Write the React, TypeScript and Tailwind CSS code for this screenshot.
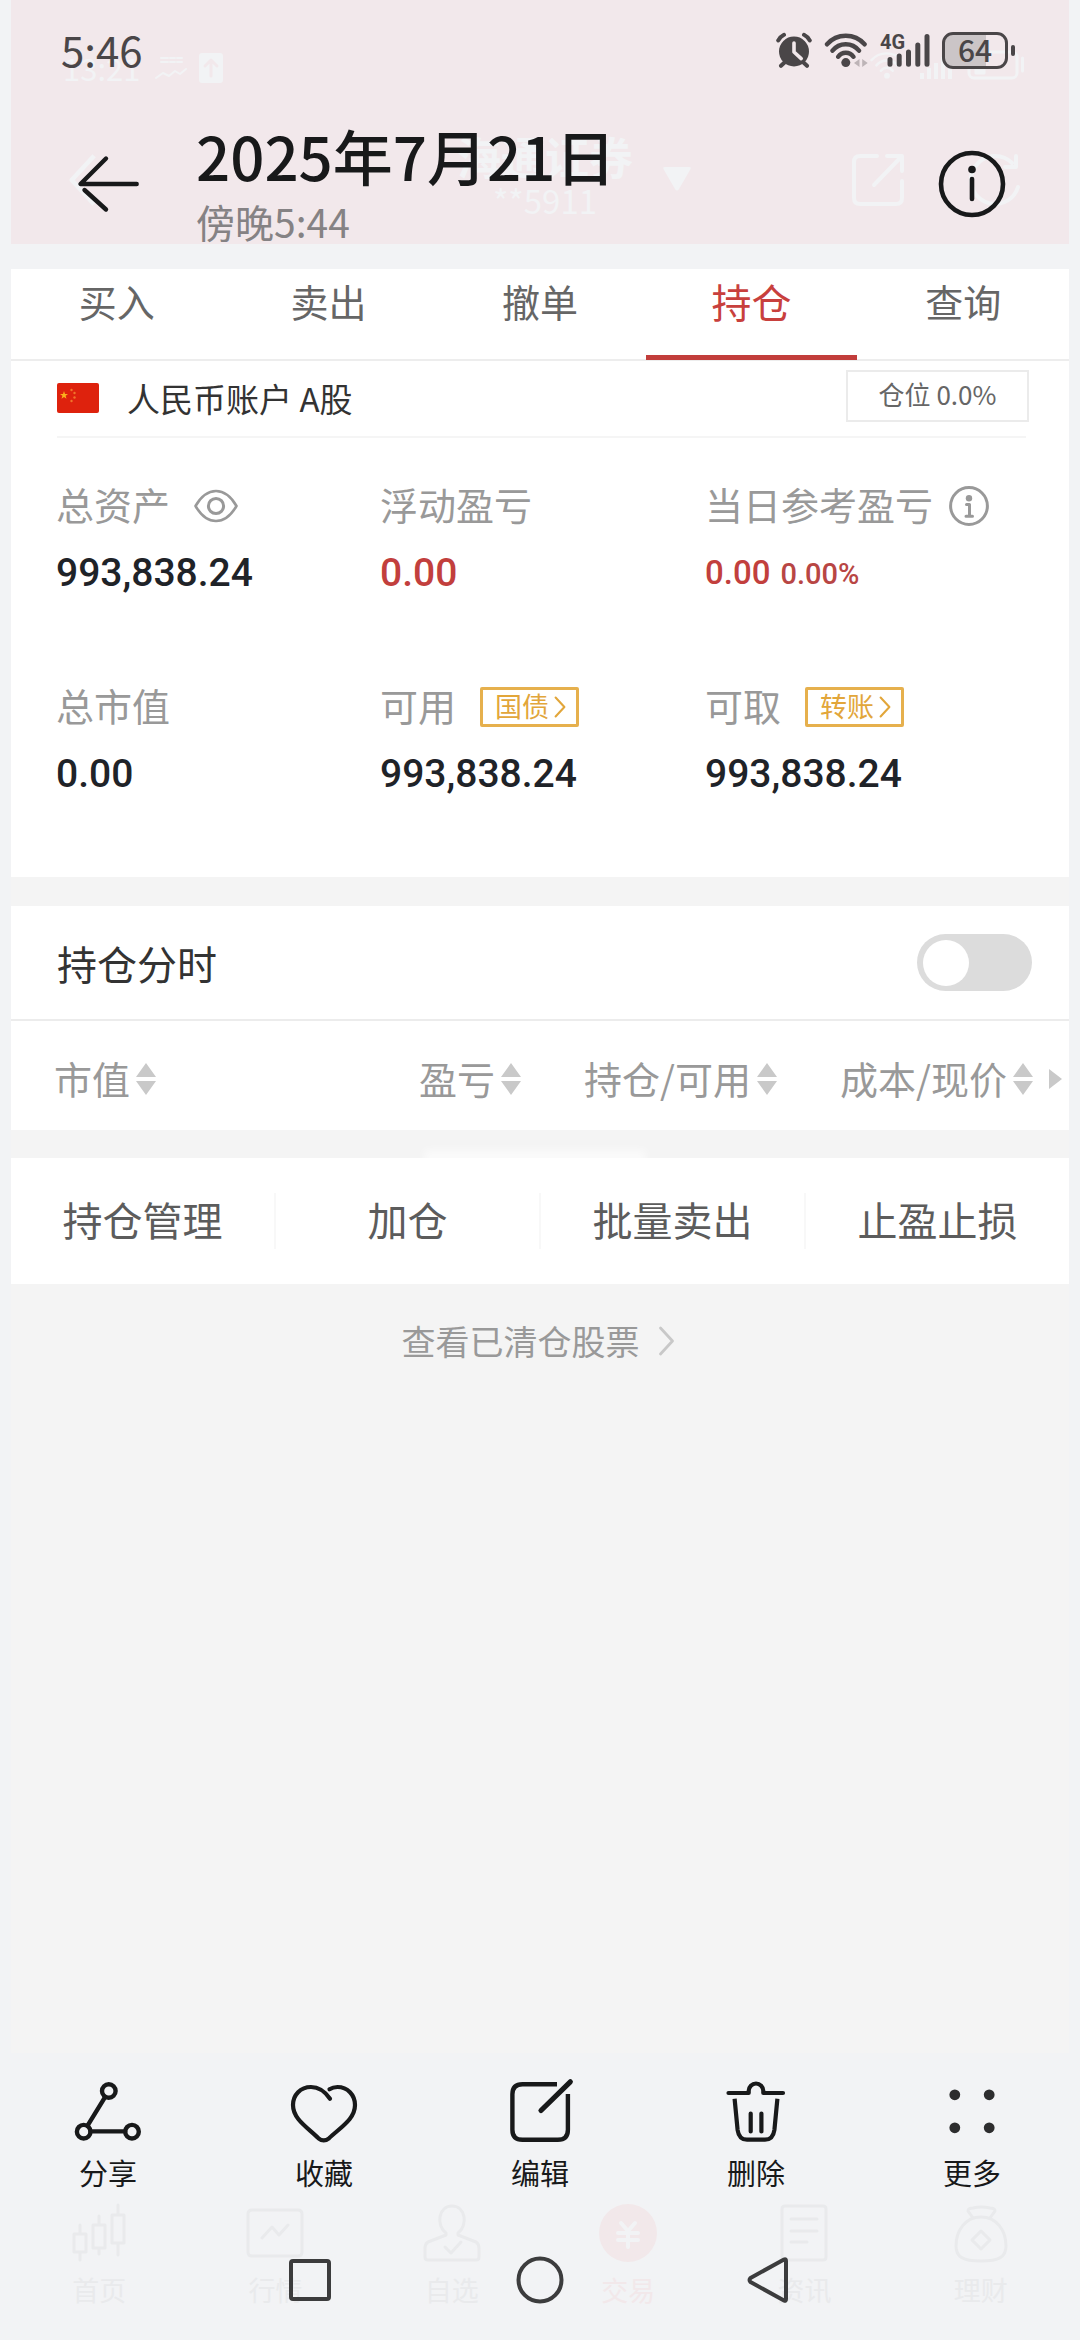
import React, { useState } from "react";

type IconProps = { className?: string };

const line = {
  fill: "none",
  stroke: "currentColor",
  strokeLinecap: "round" as const,
  strokeLinejoin: "round" as const,
};

/* ---------- status bar ---------- */

const AlarmIcon = () => (
  <svg viewBox="0 0 36 36" className="h-[36px] w-[36px]" {...line} strokeWidth="4">
    <circle cx="18" cy="19.5" r="15" fill="currentColor" stroke="none" />
    <path d="M2.2 8.4Q4.4 4.6 8 2.8M33.8 8.4Q31.6 4.6 28 2.8M8.5 30.5L5 33.8M27.5 30.5L31 33.8" />
    <path d="M18 11V20L25.2 26.6" stroke="#f2e8eb" strokeWidth="3.6" />
  </svg>
);

const WifiIcon = () => (
  <svg viewBox="0 0 44 36" className="h-[36px] w-[44px]" {...line} strokeWidth="4.4">
    <path d="M3 12.3A25 25 0 0 1 40.6 12.3M8.5 18.7A16.9 16.9 0 0 1 35 18.7M14.2 24.8A9.2 9.2 0 0 1 29.4 24.8" />
    <circle cx="21.8" cy="30.6" r="4.5" fill="currentColor" stroke="none" />
    <path d="M35.5 27V35L30 31zM38.2 27V35L43.7 31z" fill="#bdb4b7" stroke="none" />
  </svg>
);

const SignalIcon = () => (
  <span className="relative block">
    <svg viewBox="0 0 50 36" className="h-[36px] w-[50px]" {...line} strokeWidth="5">
      <path d="M10 27.5V32.3M19.2 24V32.3M28.5 20V32.3M37.8 13V32.3M47 4.5V32.3" />
    </svg>
    <span className="absolute left-0 top-0 font-['Roboto',sans-serif] text-[20px] font-bold leading-[20px]">4G</span>
  </span>
);

const Battery = () => (
  <span className="flex items-center gap-[3px]">
    <span className="flex h-[37px] w-[66px] items-center justify-center rounded-[11px] border-[3px] border-[#4a4648] bg-linear-to-r from-[#cbc5c7] from-68% to-transparent to-68% text-[30px] font-medium leading-[30px]">
      <span className="-mt-[2px]">64</span>
    </span>
    <span className="h-[11px] w-[4px] rounded-full bg-[#4a4648]" />
  </span>
);

/* ---------- viewer icons ---------- */

const BackIcon = () => (
  <svg viewBox="0 0 72 72" className="h-[72px] w-[72px]" {...line} strokeWidth="4.4">
    <path d="M34 10.5L8.5 36H64.7M12.5 42L34 61.5" />
  </svg>
);

const InfoIcon = ({ className }: IconProps) => (
  <svg viewBox="0 0 72 72" className={className} {...line} strokeWidth="4.6">
    <circle cx="36" cy="36" r="31" />
    <path d="M36 31V51" />
    <circle cx="36" cy="21.5" r="3.8" fill="currentColor" stroke="none" />
  </svg>
);

const ShareIcon = () => (
  <svg viewBox="0 0 72 72" className="h-[72px] w-[72px]" {...line} strokeWidth="4.4">
    <circle cx="36.8" cy="15" r="6.8" />
    <circle cx="11.7" cy="55.7" r="6.8" />
    <circle cx="60" cy="55.7" r="6.8" />
    <path d="M15.4 49.8L33.2 20.8M18.5 55.4H53.2" />
  </svg>
);

const HeartIcon = () => (
  <svg viewBox="0 0 72 72" className="h-[72px] w-[72px]" {...line} strokeWidth="4.2">
    <path d="M42 22.7C37 15.5 31 11 23 11C12.5 11 5 18.8 5 29C5 43 19 51 30.5 62.3Q35.7 66.5 41 62.3C53 51 67 43 67 29C67 18.8 59.5 11 49.5 11Q45 11 41.5 13.3" />
  </svg>
);

const EditIcon = () => (
  <svg viewBox="0 0 72 72" className="h-[72px] w-[72px]" {...line} strokeWidth="4.4">
    <path d="M53 8.2H18.5Q8.4 8.2 8.4 18.3V53.7Q8.4 63.8 18.5 63.8H53.8Q63.9 63.8 63.9 53.7V18" strokeLinecap="butt" />
    <path d="M37 34.5L66.3 5.8" strokeWidth="5.2" />
  </svg>
);

const TrashIcon = () => (
  <svg viewBox="0 0 72 72" className="h-[72px] w-[72px]" {...line} strokeWidth="4.2">
    <path d="M8.5 17H28.7V14.8A7.3 7.3 0 0 1 43.3 14.8V17H63" />
    <path d="M14.6 22.7L17.6 54Q19 63.7 27 63.7H45Q53 63.7 54.4 54L57.4 22.7" strokeLinecap="butt" />
    <path d="M30.7 37.5V55.5M41.4 37.5V55.5" />
  </svg>
);

const MoreIcon = () => (
  <svg viewBox="0 0 72 72" className="h-[72px] w-[72px]" fill="#2d2d2e">
    <circle cx="18.8" cy="18.8" r="5.4" />
    <circle cx="53.2" cy="18.8" r="5.4" />
    <circle cx="18.8" cy="51.8" r="5.4" />
    <circle cx="53.2" cy="51.8" r="5.4" />
  </svg>
);

/* ---------- account icons ---------- */

const FlagIcon = () => (
  <svg viewBox="0 0 42 30" className="-mt-[2px] h-[30px] w-[42px]">
    <rect width="42" height="30" rx="2" fill="#de220d" />
    <path d="M7 8L8 11H11L8.6 12.8L9.5 15.8L7 14L4.5 15.8L5.4 12.8L3 11H6z" fill="#fbb11c" />
    <g fill="#f0752a">
      <circle cx="14.5" cy="7" r="1.2" />
      <circle cx="17.5" cy="10" r="1.2" />
      <circle cx="17.5" cy="14.5" r="1.2" />
      <circle cx="14.5" cy="18" r="1.2" />
    </g>
  </svg>
);

const EyeIcon = () => (
  <svg viewBox="0 0 44 34" className="h-[34px] w-[44px]" {...line} strokeWidth="2.6">
    <path d="M1.5 17C7 7.5 13.5 2 22 2S37 7.5 42.5 17C37 26.5 30.5 32 22 32S7 26.5 1.5 17Z" />
    <circle cx="22" cy="17" r="7.6" strokeWidth="3" />
  </svg>
);

const HintIcon = () => (
  <svg viewBox="0 0 40 40" className="h-[40px] w-[40px]" {...line} strokeWidth="3">
    <circle cx="20" cy="20" r="18.4" />
    <circle cx="20" cy="12.3" r="3.2" fill="currentColor" stroke="none" />
    <path d="M17.5 18.5H20.5V30M17 30.2H23.5" />
  </svg>
);

const SortIcon = () => (
  <svg viewBox="0 0 20 32" className="h-[32px] w-[20px]" fill="#c9c9c9">
    <path d="M10 0L20 14H0zM10 32L0 18H20z" />
  </svg>
);

const Chevron = ({ className }: IconProps) => (
  <svg viewBox="0 0 16 30" className={className} {...line} strokeWidth="2.8">
    <path d="M2 2L14 15L2 28" />
  </svg>
);

/* ---------- faint layer showing through the translucent bars ---------- */

const FaintHeader = () => (
  <div aria-hidden="true" className="pointer-events-none absolute inset-0 flex flex-col text-[#f2f3f5]">
    <div className="flex h-[100px] items-start justify-between pl-[52px] pr-[44px] pt-[50px]">
      <div className="flex items-center gap-[12px]">
        <span className="w-[80px] text-[31px] leading-[36px]">13:21</span>
        <svg viewBox="0 0 32 32" className="h-[32px] w-[32px]" {...line} strokeWidth="2">
          <path d="M1 26L8 21L14 24L20 19L25 22L31 17M6 6H13M15 6H20M22 6H27M6 10H13M15 10H20M22 10H27" />
        </svg>
        <svg viewBox="0 0 24 30" className="h-[30px] w-[24px]" {...line} strokeWidth="3">
          <rect width="24" height="30" rx="3" fill="#f2f3f5" stroke="none" />
          <path d="M12 23V8M6 13L12 7L18 13" stroke="#f2e8eb" />
        </svg>
      </div>
      <div className="flex items-center gap-[14px]">
        <svg viewBox="0 0 44 36" className="h-[30px] w-[36px]" {...line} strokeWidth="3">
          <path d="M3 12A25 25 0 0 1 40 12M9 18.5A17 17 0 0 1 35 18.5M14.5 25A9 9 0 0 1 29 25" />
          <circle cx="22" cy="31" r="3.5" fill="currentColor" stroke="none" />
        </svg>
        <svg viewBox="0 0 34 28" className="h-[28px] w-[34px]" {...line} strokeLinecap="butt" strokeWidth="4">
          <path d="M3 22V28M10 17V28M17 12V28M24 6V28M31 0V28" />
        </svg>
        <svg viewBox="0 0 58 30" className="h-[30px] w-[58px]" {...line} strokeWidth="3">
          <rect x="2" y="2" width="48" height="26" rx="5" />
          <path d="M9 7H17V23H9zM55.5 8V21" fill="currentColor" />
        </svg>
      </div>
    </div>
    <div className="flex h-[144px] items-center justify-between pl-[56px] pr-[48px]">
      <svg viewBox="0 0 30 60" className="mt-[16px] h-[56px] w-[30px]" {...line} strokeLinecap="butt" strokeWidth="5">
        <path d="M28 4L4 30L28 56" />
      </svg>
      <div className="ml-[360px] flex grow items-center gap-[30px]">
        <div className="flex flex-col items-center pt-[8px]">
          <span className="text-[44px] font-bold leading-[48px]">海通证券</span>
          <span className="text-[33px] leading-[40px]">**5911</span>
        </div>
        <svg viewBox="0 0 28 24" className="mt-[14px] h-[24px] w-[28px]" fill="currentColor">
          <path d="M2 0H26Q29 0 27 3L16 22Q14 25 12 22L1 3Q-1 0 2 0Z" />
        </svg>
      </div>
      <div className="mt-[16px] flex gap-[62px]">
        <svg viewBox="0 0 54 54" className="h-[54px] w-[54px]" {...line} strokeWidth="4">
          <path d="M26 3H9Q3 3 3 9V45Q3 51 9 51H45Q51 51 51 45V28M36 3H51V18M51 3L23 32" />
        </svg>
        <svg viewBox="0 0 54 54" className="h-[54px] w-[54px]" {...line} strokeWidth="4">
          <path d="M45 10A24 24 0 1 0 51 34M49 3V14H38" />
        </svg>
      </div>
    </div>
  </div>
);

const faintTabs: { label: string; tone: string; icon: React.ReactNode }[] = [
  {
    label: "首页",
    tone: "text-[#e9eaec]",
    icon: <path d="M3 30H15V48H3zM9 21V30M9 48V56M22 21H34V44H22zM28 12V21M28 44V50M41 11H53V39H41zM47 1V11M47 39V51" />,
  },
  {
    label: "行情",
    tone: "text-[#e9eaec]",
    icon: <path d="M5 6H51Q55 6 55 10V48Q55 52 51 52H5Q1 52 1 48V10Q1 6 5 6ZM15 34L25 23L32 31L41 21" />,
  },
  {
    label: "自选",
    tone: "text-[#e9eaec]",
    icon: (
      <path d="M22 29C12 22 14 2 28 2S44 22 34 29V31L52 38Q55 40 55 44V53Q55 56 52 56H4Q1 56 1 53V44Q1 40 4 38L22 31ZM21 43L27 49L37 38" />
    ),
  },
  {
    label: "交易",
    tone: "text-[#f2e8ea]",
    icon: (
      <>
        <circle cx="28" cy="29" r="29" fill="currentColor" stroke="none" />
        <path d="M21 19L28 27L35 19M18 29H38M18 36H38M28 28V43" stroke="#f2f3f5" strokeWidth="4" />
      </>
    ),
  },
  {
    label: "资讯",
    tone: "text-[#e9eaec]",
    icon: <path d="M9 2H47Q50 2 50 5V53Q50 56 47 56H9Q6 56 6 53V5Q6 2 9 2ZM15 15H41M15 27H41M15 38H31" />,
  },
  {
    label: "理财",
    tone: "text-[#e9eaec]",
    icon: (
      <path d="M20 14L15 7Q15 4 20 4Q28 2 37 4Q42 4 42 7L37 14M28 13C12 13 3 27 3 42C3 53 10 57 28 57S53 53 53 42C53 27 44 13 28 13ZM28 27L37 36L28 45L19 36Z" />
    ),
  },
];

const FaintTabs = () => (
  <div aria-hidden="true" className="pointer-events-none absolute inset-x-[11px] bottom-0 flex pb-[30px]">
    {faintTabs.map((t) => (
      <div key={t.label} className={`flex flex-1 flex-col items-center ${t.tone}`}>
        <svg viewBox="0 0 56 58" className="h-[58px] w-[56px] overflow-visible" {...line} strokeWidth="3">
          {t.icon}
        </svg>
        <span className="mt-[8px] text-[27px] leading-[40px]">{t.label}</span>
      </div>
    ))}
  </div>
);

/* ---------- account page ---------- */

const tabs = ["买入", "卖出", "撤单", "持仓", "查询"];

const Tag = ({ children }: { children: React.ReactNode }) => (
  <button className="flex h-[40px] items-center gap-[4px] rounded-[2px] border-[3px] border-[#e6b04d] pl-[12px] pr-[9px] text-[27px] leading-[30px] text-[#e2a63a]">
    <span className="-mt-[2px]">{children}</span>
    <Chevron className="h-[22px] w-[14px]" />
  </button>
);

type StatProps = { label: string; extra?: React.ReactNode; gap?: string; children: React.ReactNode };

const Stat = ({ label, extra, gap = "gap-[24px]", children }: StatProps) => (
  <div>
    <dt className={`flex h-[46px] items-center text-[#999] ${gap}`}>
      <span className="-mt-1 text-[38px] leading-[44px]">{label}</span>
      {extra}
    </dt>
    <dd className="mt-[20px] flex items-baseline gap-[10px] font-['Roboto',sans-serif] text-[39px] font-medium leading-[48px] text-[#1f2328]">
      {children}
    </dd>
  </div>
);

const columns = ["市值", "盈亏", "持仓/可用", "成本/现价"];
const actions = ["持仓管理", "加仓", "批量卖出", "止盈止损"];

const toolbar = [
  { label: "分享", icon: <ShareIcon /> },
  { label: "收藏", icon: <HeartIcon /> },
  { label: "编辑", icon: <EditIcon /> },
  { label: "删除", icon: <TrashIcon /> },
  { label: "更多", icon: <MoreIcon /> },
];

export default function App() {
  const [tab, setTab] = useState("持仓");
  const [intraday, setIntraday] = useState(false);

  return (
    <div className="flex min-h-screen flex-col bg-[#f2f3f5] font-['Noto_Sans_CJK_SC',sans-serif] text-[#18191a]">
      <header className="relative mx-[11px] bg-[#f2e8eb]">
        <FaintHeader />
        <div className="relative flex h-[100px] items-center justify-between pl-[50px] pr-[54px] text-[#4a4648]">
          <span className="-mt-[2px] text-[42px] leading-[48px]">5:46</span>
          <div className="flex items-center gap-[12px]">
            <AlarmIcon />
            <WifiIcon />
            <SignalIcon />
            <Battery />
          </div>
        </div>
        <div className="relative flex items-center pl-[61px] pr-[61px] pt-[10px]">
          <button aria-label="返回" className="mt-[14px]">
            <BackIcon />
          </button>
          <div className="ml-[52px] grow">
            <h1 className="text-[60px] font-medium leading-[90px]">2025年7月21日</h1>
            <p className="pb-[2px] text-[39px] leading-[42px] text-[#858284]">傍晚5:44</p>
          </div>
          <button aria-label="详情" className="mt-[14px]">
            <InfoIcon className="h-[72px] w-[72px]" />
          </button>
        </div>
      </header>

      <main className="mx-[11px] mt-[25px] flex grow flex-col bg-[#f4f4f4]">
        <section className="bg-white pb-[79px]">
          <nav className="flex border-b-2 border-[#ededed]">
            {tabs.map((t) => (
              <button
                key={t}
                onClick={() => setTab(t)}
                className={
                  t === tab
                    ? "-mb-px h-[91px] flex-1 border-b-[5px] border-[#c23d3b] pb-[22px] text-[40px] leading-[64px] text-[#c8403d]"
                    : "-mb-px h-[91px] flex-1 border-b-[5px] border-transparent pb-[22px] text-[38px] leading-[64px] text-[#666]"
                }
              >
                {t}
              </button>
            ))}
          </nav>

          <div className="ml-[46px] mr-[43px] flex h-[77px] items-center border-b-2 border-[#f5f5f5]">
            <FlagIcon />
            <span className="-mt-[2px] ml-[28px] grow text-[33px] leading-[44px] text-[#333]">人民币账户 A股</span>
            <button className="-mr-[3px] mb-[6px] h-[52px] w-[183px] border-2 border-[#ebebeb] pb-[4px] text-[26px] leading-[44px] text-[#666]">
              仓位 0.0%
            </button>
          </div>

          <dl className="grid grid-cols-[324px_325px_1fr] gap-y-[86px] pl-[45px] pt-[45px]">
            <Stat label="总资产" extra={<button aria-label="隐藏金额"><EyeIcon /></button>}>
              993,838.24
            </Stat>
            <Stat label="浮动盈亏">
              <span className="text-[#c23f3d]">0.00</span>
            </Stat>
            <Stat label="当日参考盈亏" gap="gap-[16px]" extra={<button aria-label="说明"><HintIcon /></button>}>
              <span className="text-[33px] text-[#c23f3d]">0.00</span>
              <span className="text-[29px] text-[#b84644]">0.00%</span>
            </Stat>
            <Stat label="总市值">0.00</Stat>
            <Stat label="可用" extra={<Tag>国债</Tag>}>
              993,838.24
            </Stat>
            <Stat label="可取" extra={<Tag>转账</Tag>}>
              993,838.24
            </Stat>
          </dl>
        </section>

        <section className="mt-[29px] bg-white">
          <label className="flex h-[115px] items-center justify-between border-b-2 border-[#ececec] pl-[46px] pr-[37px]">
            <span className="text-[40px] leading-[48px] text-[#333]">持仓分时</span>
            <input
              type="checkbox"
              role="switch"
              checked={intraday}
              onChange={(e) => setIntraday(e.target.checked)}
              className="flex h-[57px] w-[115px] appearance-none items-center rounded-full bg-[#dcdcdc] px-[6px] before:block before:h-[46px] before:w-[46px] before:rounded-full before:bg-white checked:justify-end checked:bg-[#c23d3b]"
            />
          </label>
          <table className="w-full table-fixed">
            <thead>
              <tr className="h-[109px]">
                {columns.map((c, i) => (
                  <th key={c} scope="col" className={i === 0 ? "pl-[43px] pt-[6px] font-normal" : "w-[256px] pt-[6px] font-normal"}>
                    <button
                      className={
                        i === 0
                          ? "flex w-full items-center gap-[6px] text-[38px] leading-[48px] text-[#999]"
                          : "flex w-full items-center justify-end gap-[6px] text-[38px] leading-[48px] text-[#999]"
                      }
                    >
                      <span className="-mt-[2px]">{c}</span>
                      <SortIcon />
                    </button>
                  </th>
                ))}
                <th className="w-[36px] pt-[6px]">
                  <svg viewBox="0 0 13 20" className="ml-[16px] h-[20px] w-[13px]" fill="#c9c9c9">
                    <path d="M0 0L13 10L0 20z" />
                  </svg>
                </th>
              </tr>
            </thead>
          </table>
        </section>

        <section className="relative mt-[28px] flex bg-white py-[35px]">
          <span className="absolute -top-[8px] left-[39%] h-[16px] w-[21%] bg-white/60 blur-[4px]" />
          {actions.map((a, i) => (
            <button
              key={a}
              className={
                i === 0
                  ? "relative flex-1 pb-[4px] text-[40px] leading-[52px] text-[#5c5c5c]"
                  : "relative flex-1 border-l-2 border-[#f8f8f8] pb-[4px] text-[40px] leading-[52px] text-[#5c5c5c]"
              }
            >
              {a}
            </button>
          ))}
        </section>

        <a href="#closed" className="mt-[35px] flex items-center justify-center gap-[18px] pr-[4px] text-[34px] leading-[44px] text-[#999]">
          查看已清仓股票
          <Chevron className="h-[30px] w-[17px] text-[#c8c8c8]" />
        </a>
      </main>

      <footer className="relative pt-[23px]">
        <FaintTabs />
        <div className="relative flex">
          {toolbar.map((t) => (
            <button key={t.label} className="flex flex-1 flex-col items-center">
              {t.icon}
              <span className="mt-[4px] text-[29px] leading-[40px]">{t.label}</span>
            </button>
          ))}
        </div>
        <nav className="relative flex items-center justify-center gap-[182px] pb-[36px] pt-[64px] text-[#3c3c3d]">
          <button aria-label="最近任务">
            <svg viewBox="0 0 48 48" className="h-[48px] w-[48px]" {...line} strokeWidth="4">
              <rect x="5" y="5" width="38" height="38" rx="2" />
            </svg>
          </button>
          <button aria-label="主屏幕">
            <svg viewBox="0 0 48 48" className="h-[48px] w-[48px]" {...line} strokeWidth="4">
              <circle cx="24" cy="24" r="21.5" />
            </svg>
          </button>
          <button aria-label="后退">
            <svg viewBox="0 0 48 48" className="h-[48px] w-[48px]" {...line} strokeWidth="4">
              <path d="M38 3.5Q40 2.5 40 5V43Q40 45.5 38 44.5L4.5 26Q2.5 24 4.5 22Z" />
            </svg>
          </button>
        </nav>
      </footer>
    </div>
  );
}
